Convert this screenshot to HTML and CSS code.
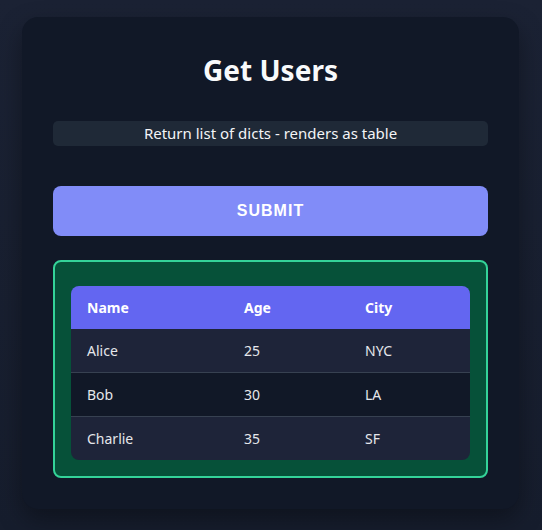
FILE: index.html
```html
<!DOCTYPE html>
<html>
<head>
<meta charset="utf-8">
<link rel="stylesheet" href="styles.css">
</head>
<body>
<div class="card">
  <h1 class="title">Get Users</h1>
  <div class="desc">Return list of dicts - renders as table</div>
  <button class="submit">SUBMIT</button>
  <div class="result">
    <table class="tbl">
      <thead>
        <tr><th class="c1">Name</th><th class="c2">Age</th><th class="c3">City</th></tr>
      </thead>
      <tbody>
        <tr class="odd"><td>Alice</td><td>25</td><td>NYC</td></tr>
        <tr class="even"><td>Bob</td><td>30</td><td>LA</td></tr>
        <tr class="odd"><td>Charlie</td><td>35</td><td>SF</td></tr>
      </tbody>
    </table>
  </div>
</div>
</body>
</html>
```
FILE: styles.css
```css
html, body {
  margin: 0;
  padding: 0;
}
body {
  background: linear-gradient(180deg, #1b2234 0%, #161d2d 100%);
  min-height: 530px;
  font-family: "Noto Sans", "Open Sans", sans-serif;
  color: #f3f4f6;
  padding: 17px 0 0 22px;
  box-sizing: border-box;
}
.card {
  width: 497px;
  box-sizing: border-box;
  background: #111827;
  border-radius: 16px;
  padding: 34px 31px 31px 31px;
  box-shadow: 0 10px 25px rgba(0, 0, 0, 0.35);
}
.title {
  margin: 0;
  text-align: center;
  font-size: 28px;
  font-weight: 700;
  line-height: 38px;
  color: #f9fafb;
}
.desc {
  margin-top: 32px;
  height: 25px;
  line-height: 25px;
  background: #1f2937;
  border-radius: 5px;
  text-align: center;
  font-size: 15px;
  color: #f3f4f6;
}
.submit {
  display: block;
  width: 100%;
  margin-top: 40px;
  height: 50px;
  border: none;
  border-radius: 8px;
  background: #818cf8;
  color: #ffffff;
  font-family: "Liberation Sans", Arial, sans-serif;
  font-weight: 700;
  font-size: 16px;
  letter-spacing: 1px;
}
.result {
  margin-top: 24px;
  border: 2px solid #34d399;
  border-radius: 8px;
  background: #065139;
  padding: 24px 16px 16px 16px;
}
.tbl {
  width: 100%;
  border-collapse: separate;
  border-spacing: 0;
  border-radius: 8px;
  overflow: hidden;
  font-size: 14px;
}
.tbl th, .tbl td {
  text-align: left;
  padding: 0 16px;
}
.tbl th {
  background: #6366f1;
  color: #ffffff;
  font-weight: 700;
  height: 43px;
}
.c1 { width: 125px; }
.c2 { width: 89px; }
.tbl td {
  height: 43px;
  color: #e5e7eb;
}
.tbl tbody tr + tr td {
  border-top: 1px solid #374151;
}
.odd td { background: #1e2439; }
.even td { background: #111827; }
```
